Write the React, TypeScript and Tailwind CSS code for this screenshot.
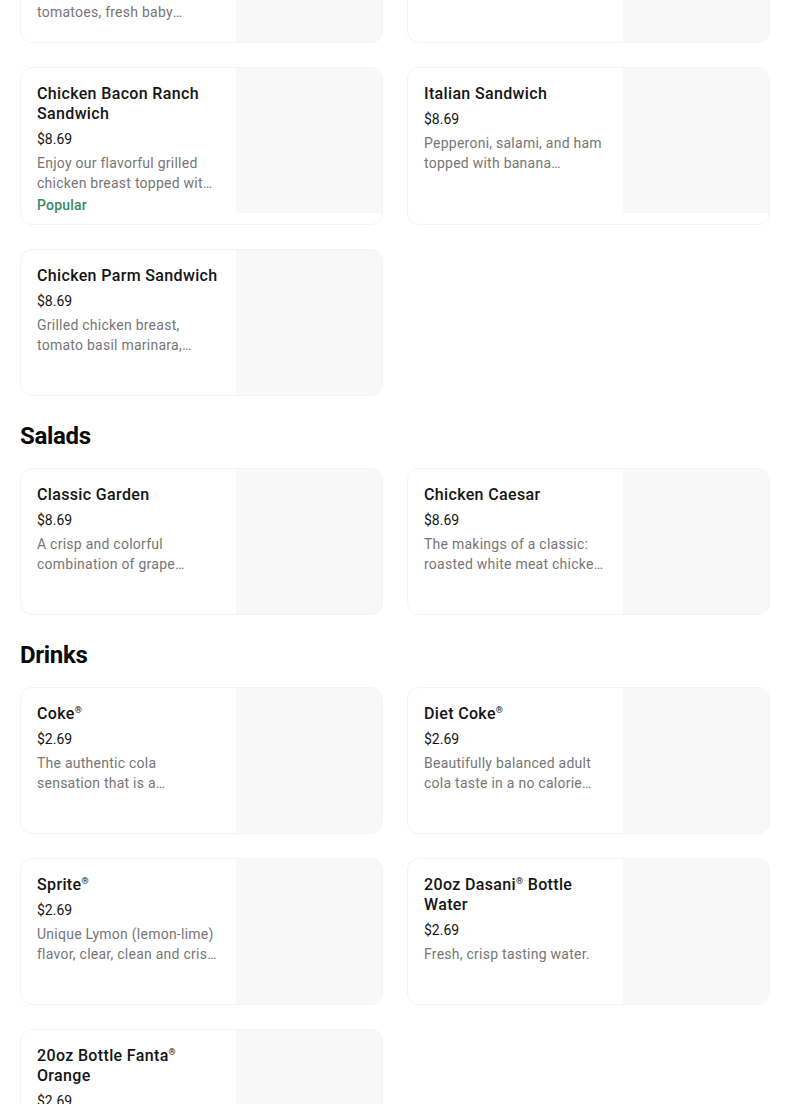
import React from "react";

type Item = {
  name: string;
  price: string;
  description: string;
  popular?: boolean;
};

const SANDWICHES: Item[] = [
  {
    name: "Turkey Bacon Club Sandwich",
    price: "$8.69",
    description: "Oven roasted turkey, ripe tomatoes, fresh baby spinach and crisp bacon.",
  },
  {
    name: "Spicy Chicken Sandwich",
    price: "$8.69",
    description: "Crispy chicken breast.",
  },
  {
    name: "Chicken Bacon Ranch Sandwich",
    price: "$8.69",
    description: "Enjoy our flavorful grilled chicken breast topped with bacon and ranch.",
    popular: true,
  },
  {
    name: "Italian Sandwich",
    price: "$8.69",
    description: "Pepperoni, salami, and ham topped with banana peppers and provolone.",
  },
  {
    name: "Chicken Parm Sandwich",
    price: "$8.69",
    description: "Grilled chicken breast, tomato basil marinara, mozzarella and parmesan.",
  },
];

const SALADS: Item[] = [
  {
    name: "Classic Garden",
    price: "$8.69",
    description: "A crisp and colorful combination of grape tomatoes and cucumbers.",
  },
  {
    name: "Chicken Caesar",
    price: "$8.69",
    description: "The makings of a classic: roasted white meat chicken and parmesan.",
  },
];

const DRINKS: Item[] = [
  {
    name: "Coke®",
    price: "$2.69",
    description: "The authentic cola sensation that is a refreshing part of sharing life.",
  },
  {
    name: "Diet Coke®",
    price: "$2.69",
    description: "Beautifully balanced adult cola taste in a no calorie beverage.",
  },
  {
    name: "Sprite®",
    price: "$2.69",
    description: "Unique Lymon (lemon-lime) flavor, clear, clean and crisp with no caffeine.",
  },
  {
    name: "20oz Dasani® Bottle Water",
    price: "$2.69",
    description: "Fresh, crisp tasting water.",
  },
  {
    name: "20oz Bottle Fanta® Orange",
    price: "$2.69",
    description: "Bright, bubbly and popular orange soda.",
  },
];

function Name({ name }: { name: string }) {
  // registered marks render small and raised, without growing the line
  const parts = name.split("®");
  return (
    <>
      {parts.map((p, i) => (
        <React.Fragment key={i}>
          {p}
          {i < parts.length - 1 && (
            <span className="text-[9px] leading-none align-[6px] text-[#141414]">®</span>
          )}
        </React.Fragment>
      ))}
    </>
  );
}

function ItemCard({ item }: { item: Item }) {
  return (
    <div className="flex bg-white border border-[#f3f3f3] rounded-xl overflow-hidden">
      <div className="flex-1 min-w-0 pl-4 pr-4 pt-4 pb-[9px]">
        <p className="text-[16px] leading-5 font-medium text-[#141414] tracking-[0.35px]">
          <Name name={item.name} />
        </p>
        <p className="mt-[5px] text-[14px] leading-5 text-[#141414]">{item.price}</p>
        <p className="mt-1 text-[14px] leading-5 text-[#767676] tracking-[0.25px] line-clamp-2">
          {item.description}
        </p>
        {item.popular && (
          <p className="mt-0.5 text-[14px] leading-5 font-medium text-[#3a8b5e] tracking-[0.2px]">
            Popular
          </p>
        )}
      </div>
      <div className="w-[146px] h-[145px] shrink-0 bg-[#f8f8f8]" />
    </div>
  );
}

function Section({ title, items }: { title: string; items: Item[] }) {
  return (
    <section>
      <h2 className="mt-6 mb-4 text-[24px] leading-8 font-bold text-[#0a0a0a] tracking-[-0.3px]">
        {title}
      </h2>
      <div className="grid grid-cols-2 gap-6">
        {items.map((item) => (
          <ItemCard key={item.name} item={item} />
        ))}
      </div>
    </section>
  );
}

export default function App() {
  return (
    <div
      className="h-[1104px] overflow-hidden bg-white pl-5 pr-[34px]"
      style={{ fontFamily: "Roboto, 'Noto Sans', sans-serif" }}
    >
      {/* list is scrolled: first row sits partly above the viewport */}
      <div className="-mt-[104px] grid grid-cols-2 gap-6">
        {SANDWICHES.map((item) => (
          <ItemCard key={item.name} item={item} />
        ))}
      </div>
      <Section title="Salads" items={SALADS} />
      <Section title="Drinks" items={DRINKS} />
    </div>
  );
}
